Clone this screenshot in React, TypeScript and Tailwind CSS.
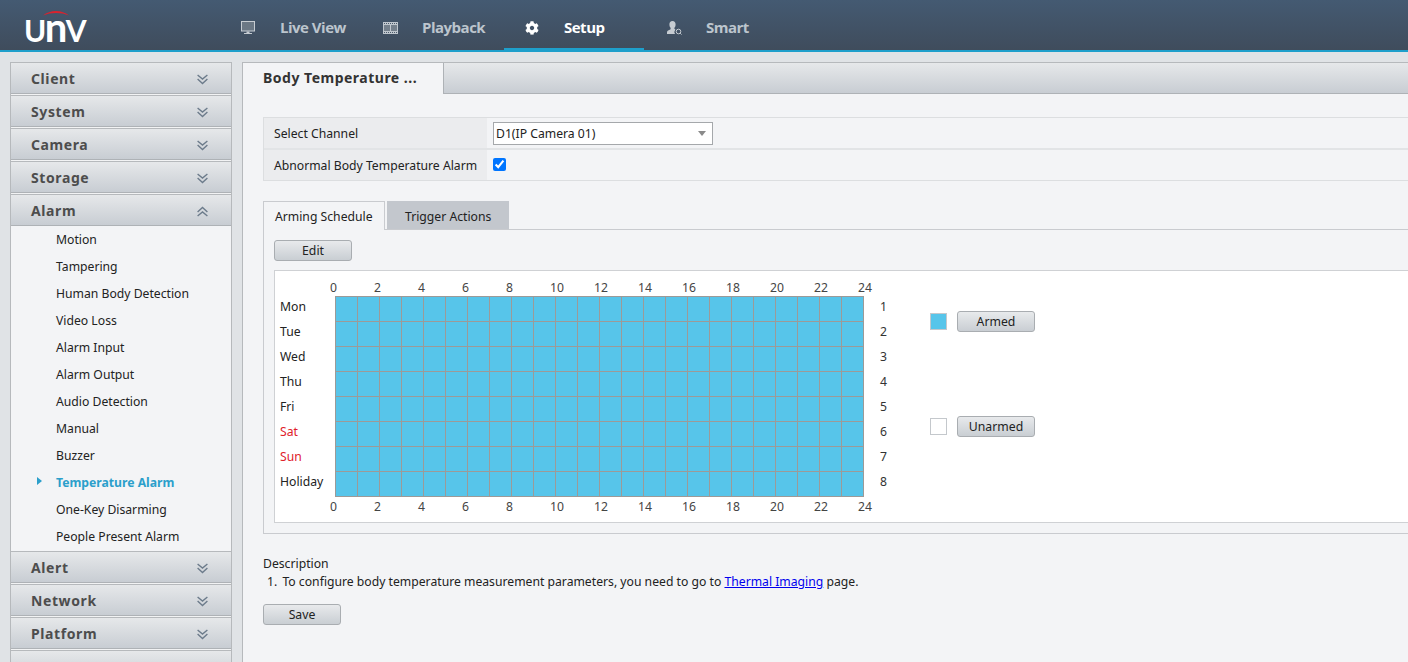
import { FaCog } from 'react-icons/fa';

const topMenu = ['Client', 'System', 'Camera', 'Storage'];
const alarmItems = [
  'Motion',
  'Tampering',
  'Human Body Detection',
  'Video Loss',
  'Alarm Input',
  'Alarm Output',
  'Audio Detection',
  'Manual',
  'Buzzer',
  'Temperature Alarm',
  'One-Key Disarming',
  'People Present Alarm',
];
const bottomMenu = ['Alert', 'Network', 'Platform', ''];
const days = ['Mon', 'Tue', 'Wed', 'Thu', 'Fri', 'Sat', 'Sun', 'Holiday'];
const hours = [0, 2, 4, 6, 8, 10, 12, 14, 16, 18, 20, 22, 24];
const cells = Array.from({ length: 192 }, (_, i) => i);

const Chevrons = ({ up = false }: { up?: boolean }) => (
  <svg width="11" height="11" viewBox="0 0 11 11" className={`mt-[3px] ${up ? 'rotate-180' : ''}`}>
    <path d="M.6 1 5.500 5l4.900-4M.6 5 5.500 9.500 10.400 5" fill="none" stroke="#6c7b8b" strokeWidth="1.4" />
  </svg>
);

const MonitorIcon = () => (
  <svg width="14" height="14" viewBox="0 0 14 14">
    <rect x="0.5" y="0.5" width="13" height="9.5" fill="#6b7885" stroke="#c6ccd2" />
    <path d="M5.500 10.500h3v1.500h2.500V13H3v-1h2.500z" fill="#c6ccd2" />
  </svg>
);

const FilmIcon = () => (
  <svg width="15" height="12" viewBox="0 0 15 12">
    <rect width="15" height="12" fill="#c0c7ce" />
    <rect x="1" y="3" width="6" height="6" fill="#74808c" />
    <rect x="8" y="3" width="6" height="6" fill="#74808c" />
    <path d="M1 1h1v1H1zM3 1h1v1H3zM5 1h1v1H5zM7 1h1v1H7zM9 1h1v1H9zM11 1h1v1h-1zM13 1h1v1h-1zM1 10h1v1H1zM3 10h1v1H3zM5 10h1v1H5zM7 10h1v1H7zM9 10h1v1H9zM11 10h1v1h-1zM13 10h1v1h-1z" fill="#4a5a6a" />
  </svg>
);

const SmartIcon = () => (
  <svg width="15" height="14" viewBox="0 0 15 14">
    <path d="M5.500 0C7.500 0 8.600 1.400 8.600 3.400c0 1.400-.5 2.600-1.200 3.300v1.100l1 .6A4 4 0 0 0 8 13H0v-1.700c0-1.300 1.600-2.100 3.600-3V6.700C2.900 6 2.400 4.800 2.400 3.400 2.400 1.400 3.500 0 5.500 0z" fill="#c6ccd2" />
    <circle cx="11.500" cy="10.500" r="2.300" fill="none" stroke="#c6ccd2" strokeWidth="1" />
    <path d="M13.200 12.200 14.500 13.500" stroke="#c6ccd2" />
  </svg>
);

const Logo = () => (
  <div className="relative w-[62px] h-[30px] ml-[26px] mt-[10px]">
    <svg width="26" height="6" viewBox="0 0 26 6" className="absolute left-[17px] top-0">
      <path d="M0 5.500C7-.6 19-.6 26 5.500 18 2.200 8 2.200 0 5.500z" fill="#d9232e" />
    </svg>
    <span className="absolute left-[-2px] top-[-3px] h-[40px] flex items-baseline leading-[40px] font-['Lato',sans-serif] font-bold text-white">
      <span className="text-[30px] tracking-[-1.5px]">U</span>
      <span className="text-[40px] tracking-[-1.5px]">n</span>
      <span className="text-[30px]">V</span>
    </span>
  </div>
);

const NavItem = ({ icon, label, active = false }: { icon: React.ReactNode; label: string; active?: boolean }) => (
  <div className={`w-[142px] h-[52px] ${active ? 'text-white' : 'text-[#bcc5cd]'}`}>
    <div className={`w-[140px] h-[52px] flex items-center pl-[21px] pt-[7px] border-b-[4px] ${active ? 'border-[#1e9fcb]' : 'border-transparent'}`}>
      <span className="w-[39px] flex items-center">{icon}</span>
      <span className="text-[15px] font-bold font-['Open_Sans',sans-serif] tracking-[-0.5px]">{label}</span>
    </div>
  </div>
);

const MenuHead = ({ label, open = false }: { label: string; open?: boolean }) => (
  <div className={`${open ? 'h-[32px]' : 'h-[33px] pb-px bg-[#f2f3f4]'} border-t border-[#b6b9bc]`}>
    <div className="h-full flex items-center justify-between pl-[20px] pr-[23px] border-b border-[#aeb2b6] bg-gradient-to-b from-[#e6e8ea] to-[#c8cdd3]">
      <span className="text-[14px] font-bold tracking-[0.6px] text-[#4d4d4d]">{label}</span>
      {label && <Chevrons up={open} />}
    </div>
  </div>
);

const GrayButton = ({ label, className = '' }: { label: string; className?: string }) => (
  <button className={`w-[78px] h-[21px] pt-px rounded-[3px] border border-[#a9adb1] bg-gradient-to-b from-[#e8eaec] to-[#c9ced3] text-[12.25px] leading-none text-[#222] ${className}`}>
    {label}
  </button>
);

export default function App() {
  return (
    <div className="w-[1408px] h-[662px] overflow-hidden bg-[#e0e3e6] text-[12.2px] text-[#222] font-['Noto_Sans',sans-serif]">
      <header className="h-[52px] flex border-b-2 border-[#1e9fcb] bg-gradient-to-b from-[#445a72] to-[#3f4c5c]">
        <div className="w-[220px]">
          <Logo />
        </div>
        <nav className="flex">
          <NavItem icon={<MonitorIcon />} label="Live View" />
          <NavItem icon={<FilmIcon />} label="Playback" />
          <NavItem icon={<FaCog className="text-white text-[14px]" />} label="Setup" active />
          <NavItem icon={<SmartIcon />} label="Smart" />
        </nav>
      </header>

      <div className="flex pt-[10px] pl-[10px]">
        <aside className="w-[222px] h-[600px] shrink-0 border-x border-[#b6b9bc] bg-[#f3f4f6]">
          {topMenu.map((m) => (
            <MenuHead key={m} label={m} />
          ))}
          <MenuHead label="Alarm" open />
          <ul className="pb-px">
            {alarmItems.map((item) => {
              const active = item === 'Temperature Alarm';
              return (
                <li key={item} className={`relative h-[27px] leading-[27px] pl-[45px] ${active ? 'font-bold text-[#2b9fcb]' : ''}`}>
                  {active && (
                    <span className="absolute left-[26px] top-[8px] w-0 h-0 border-y-[4px] border-y-transparent border-l-[5px] border-l-[#2b9fcb]" />
                  )}
                  {item}
                </li>
              );
            })}
          </ul>
          {bottomMenu.map((m) => (
            <MenuHead key={m || 'more'} label={m} />
          ))}
        </aside>

        <main className="ml-[10px] flex-1 h-[600px] border-t border-l border-[#b6b9bc] bg-[#f3f4f6]">
          <div className="flex h-[31px]">
            <div className="w-[201px] pl-[20px] border-r border-[#aeb2b6] text-[14px] font-bold tracking-[0.5px] text-[#333] leading-[30px]">
              Body Temperature ...
            </div>
            <div className="flex-1 border-b border-[#aeb2b6] bg-gradient-to-b from-[#e6e8ea] to-[#c8cdd3]" />
          </div>

          <div className="pl-[20px] pt-[23px]">
            <div className="border-y border-l border-[#dcdee0]">
              <div className="flex h-[32px] border-b-2 border-[#e2e4e6]">
                <div className="w-[223px] pl-[10px] bg-[#ebecee] leading-[32px]">Select Channel</div>
                <div className="pl-[6px] pt-[4px]">
                  <div className="w-[220px] h-[23px] flex items-center justify-between pl-[2px] pr-[6px] bg-white border border-[#a5a8ab]">
                    <span className="pt-px">D1(IP Camera 01)</span>
                    <span className="w-0 h-0 border-x-[4px] border-x-transparent border-t-[5px] border-t-[#8a8a8a]" />
                  </div>
                </div>
              </div>
              <div className="flex h-[30px]">
                <div className="w-[223px] pl-[10px] bg-[#ebecee] leading-[32px]">Abnormal Body Temperature Alarm</div>
                <div className="pl-[6px] pt-[8px]">
                  <input type="checkbox" defaultChecked className="block w-[13px] h-[13px] accent-[#0075ff]" />
                </div>
              </div>
            </div>

            <div className="flex mt-[20px] h-[29px] border-b border-[#c9cbcf]">
              <div className="w-[122px] h-[29px] pl-[11px] border border-b-0 border-[#c9cbcf] bg-[#f3f4f6] leading-[29px]">
                Arming Schedule
              </div>
              <div className="ml-[2px] w-[122px] h-[28px] pl-[18px] bg-[#c3c7cd] leading-[31px]">Trigger Actions</div>
            </div>

            <div className="h-[304px] border-l border-b border-[#c9cbcf] pl-[10px] pt-[10px]">
              <GrayButton label="Edit" />
              <div className="mt-[9px] h-[253px] border-y border-l border-[#cfd1d4] bg-white pt-[8px]">
                <div className="flex pl-[55px] h-[17px] items-center pt-[2px] text-[#444]">
                  {hours.map((h) => (
                    <span key={h} className="w-[44px] shrink-0">{h}</span>
                  ))}
                </div>
                <div className="flex">
                  <div className="w-[60px] pl-[5px]">
                    {days.map((d) => (
                      <div key={d} className={`h-[25px] leading-[21px] ${d === 'Sat' || d === 'Sun' ? 'text-[#e0202a]' : ''}`}>
                        {d}
                      </div>
                    ))}
                  </div>
                  <div className="w-[529px] h-[201px] grid grid-cols-[repeat(24,22px)] grid-rows-[repeat(8,25px)] border-r border-b border-[#9c9a98] bg-[#57c5ea]">
                    {cells.map((c) => (
                      <div key={c} className="border-t border-l border-[#9c9a98]" />
                    ))}
                  </div>
                  <div className="w-[66px] pl-[16px] text-[#333]">
                    {days.map((d, i) => (
                      <div key={d} className="h-[25px] leading-[21px]">{i + 1}</div>
                    ))}
                  </div>
                  <div className="flex flex-col pt-[15px]">
                    <div className="flex items-center">
                      <span className="w-[17px] h-[17px] border border-[#c4c8cc] bg-[#57c5ea]" />
                      <GrayButton label="Armed" className="ml-[10px]" />
                    </div>
                    <div className="flex items-center mt-[84px]">
                      <span className="w-[17px] h-[17px] border border-[#c4c8cc] bg-white" />
                      <GrayButton label="Unarmed" className="ml-[10px]" />
                    </div>
                  </div>
                </div>
                <div className="flex pl-[55px] h-[17px] items-center mt-[2px] text-[#444]">
                  {hours.map((h) => (
                    <span key={h} className="w-[44px] shrink-0">{h}</span>
                  ))}
                </div>
              </div>
            </div>

            <div className="mt-[20px] pt-px leading-[18px]">Description</div>
            <div className="pl-[4px] leading-[18px]">
              1. <span className="ml-[2px]">To configure body temperature measurement parameters, you need to go to </span>
              <a className="underline text-[#0000ee]">Thermal Imaging</a> page.
            </div>
            <GrayButton label="Save" className="mt-[13px]" />
          </div>
        </main>
      </div>
    </div>
  );
}
